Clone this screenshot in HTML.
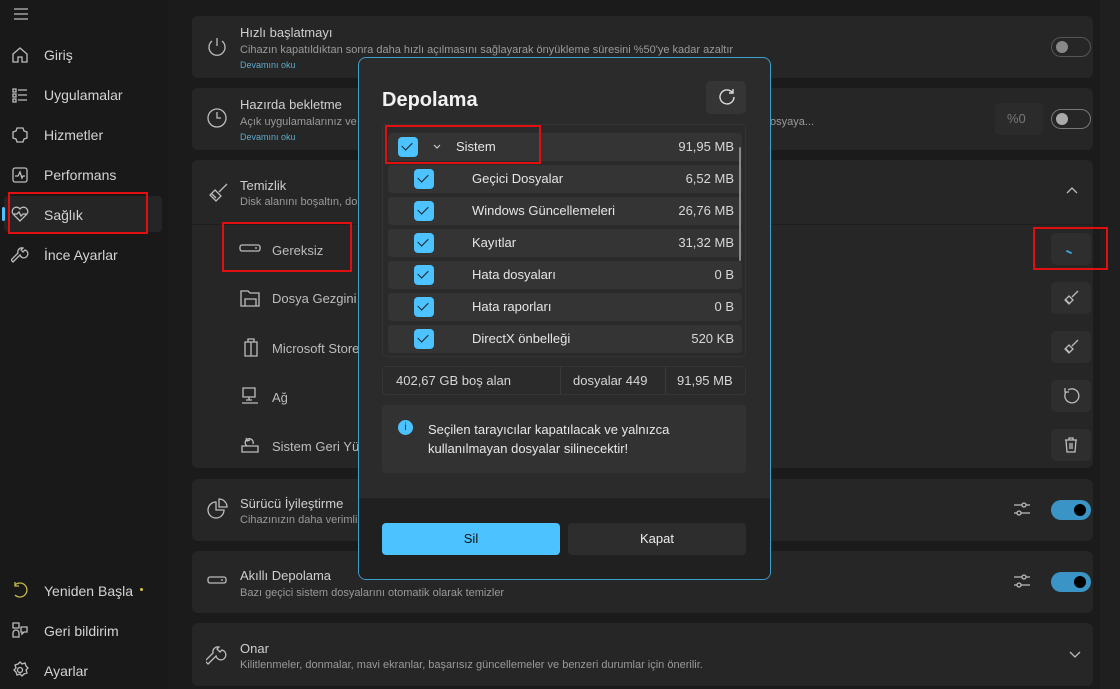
<!DOCTYPE html>
<html><head><meta charset="utf-8"><style>
*{margin:0;padding:0;box-sizing:border-box}
body{width:1120px;height:689px;overflow:hidden;background:#1b1b1b;font-family:"Liberation Sans","Noto Sans CJK JP",sans-serif;position:relative;color:#d0d0d0}
.a{position:absolute}
.side{left:0;top:0;width:168px;height:689px;background:#191919}
.nav{position:absolute;left:44px;font-size:14px;color:#d4d4d4}
.ic{position:absolute;stroke:#bdbdbd;fill:none;stroke-width:1.3}
.card{position:absolute;left:192px;width:901px;background:#262626;border-radius:6px}
.t{position:absolute;font-size:13px;color:#cfcfcf}
.s{position:absolute;font-size:11px;color:#9a9a9a;white-space:nowrap}
.l{position:absolute;font-size:9px;color:#5fa9c9}
.sub{position:absolute;font-size:13px;color:#bdbdbd}
.btn{position:absolute;left:1051px;width:40px;height:32px;background:#2e2e2e;border-radius:5px}
.red{position:absolute;border:2px solid #e01010}
.tog{position:absolute;width:40px;height:20px;border-radius:10px}
.dlg{left:358px;top:57px;width:413px;height:523px;background:#2b2b2b;border:1px solid #3d9fd0;border-radius:8px;overflow:hidden}
.row{position:absolute;left:5px;width:354px;height:28px;background:#343434;border-radius:4px;font-size:13px;color:#e6e6e6}
.cb{position:absolute;top:4px;width:20px;height:20px;background:#4cc2ff;border-radius:4px}
.cb:after{content:"";position:absolute;left:6px;top:3px;width:5px;height:9px;border:solid #1a1a1a;border-width:0 1.6px 1.6px 0;transform:rotate(45deg)}
.row .n{position:absolute;left:84px;top:6px}
.row .v{position:absolute;right:8px;top:6px;color:#d8d8d8}
</style></head><body>
<div class="a side"></div>
<svg class="ic" style="left:13px;top:8px" width="16" height="12"><path d="M1 1h14M1 6h14M1 11h14"/></svg>
<svg class="ic" style="left:11px;top:46px" width="18" height="18"><path d="M2 8L9 2l7 6v8h-5v-5H7v5H2z"/></svg><div class="nav" style="top:47px">Giriş</div>
<svg class="ic" style="left:11px;top:86px" width="18" height="18"><path d="M2 3h3v3H2zM2 8h3v3H2zM2 13h3v3H2zM7 4h9M7 9h9M7 14h9"/></svg><div class="nav" style="top:87px">Uygulamalar</div>
<svg class="ic" style="left:11px;top:126px" width="18" height="18"><path d="M6 2h6l1 3 3 1v6l-3 1-1 3H6l-1-3-3-1V6l3-1z"/></svg><div class="nav" style="top:127px">Hizmetler</div>
<svg class="ic" style="left:11px;top:166px" width="18" height="18"><rect x="2" y="2" width="14" height="14" rx="2"/><path d="M4 10h3l2-4 2 6 1-2h2"/></svg><div class="nav" style="top:167px">Performans</div>
<div class="a" style="left:4px;top:196px;width:158px;height:36px;background:#252525;border-radius:4px"></div>
<div class="a" style="left:2px;top:207px;width:3px;height:14px;background:#4cc2ff;border-radius:2px"></div>
<svg class="ic" style="left:11px;top:205px" width="18" height="18"><path d="M9 16L2 9a4 4 0 017-5 4 4 0 017 5zM2 9h4l2-2 2 4 2-2h4"/></svg><div class="nav" style="top:207px">Sağlık</div>
<svg class="ic" style="left:11px;top:246px" width="18" height="18"><path d="M2 16l7-7a4 4 0 105-5l-2 2-2-2 2-2a4 4 0 00-5 5l-7 7z"/></svg><div class="nav" style="top:247px">İnce Ayarlar</div>
<svg class="ic" style="left:11px;top:581px;stroke:#c9b84a" width="18" height="18"><path d="M4 4a7 7 0 110 10M4 1v4h4"/></svg><div class="nav" style="top:583px">Yeniden Başla</div>
<div class="a" style="left:140px;top:588px;width:3px;height:3px;border-radius:2px;background:#d6c33a"></div>
<svg class="ic" style="left:11px;top:621px" width="18" height="18"><path d="M2 2h6v5H2zM10 6h6v5h-3l-2 2v-2h-1zM2 12a3 3 0 016 0v4H2z"/></svg><div class="nav" style="top:623px">Geri bildirim</div>
<svg class="ic" style="left:11px;top:661px" width="18" height="18"><circle cx="9" cy="9" r="2.5"/><path d="M9 1l2 2 3-1 1 3 2 2-2 2 1 3-3 1-2 2-2-2-3 1-1-3-2-2 2-2-1-3 3-1z"/></svg><div class="nav" style="top:663px">Ayarlar</div>

<div class="a" style="left:1100px;top:0;width:20px;height:689px;background:#1f1f1f"></div>

<div class="card" style="top:16px;height:62px"></div>
<svg class="ic" style="left:206px;top:36px" width="22" height="22"><path d="M11 2v8M6 5a8 8 0 1010 0"/></svg>
<div class="t" style="left:240px;top:25px">Hızlı başlatmayı</div>
<div class="s" style="left:240px;top:44px">Cihazın kapatıldıktan sonra daha hızlı açılmasını sağlayarak önyükleme süresini %50'ye kadar azaltır</div>
<div class="l" style="left:240px;top:60px">Devamını oku</div>
<div class="tog" style="left:1051px;top:37px;border:1px solid #555"></div><div class="a" style="left:1056px;top:41px;width:12px;height:12px;border-radius:6px;background:#888"></div>

<div class="card" style="top:88px;height:62px"></div>
<svg class="ic" style="left:206px;top:107px" width="22" height="22"><circle cx="11" cy="11" r="9"/><path d="M11 5v6h4"/></svg>
<div class="t" style="left:240px;top:97px">Hazırda bekletme</div>
<div class="s" style="left:240px;top:116px">Açık uygulamalarınız ve belgelerinizi kaydederek cihazınızı kapatır, dosyaya...</div>
<div class="s" style="left:770px;top:116px">osyaya...</div>
<div class="l" style="left:240px;top:132px">Devamını oku</div>
<div class="a" style="left:995px;top:103px;width:48px;height:32px;background:#2b2b2b;border-radius:4px;font-size:13px;color:#777;padding:8px 0 0 12px">%0</div>
<div class="tog" style="left:1051px;top:109px;border:1px solid #777"></div><div class="a" style="left:1056px;top:113px;width:12px;height:12px;border-radius:6px;background:#aaa"></div>

<div class="card" style="top:160px;height:308px"></div>
<div class="a" style="left:192px;top:224px;width:901px;height:1px;background:#1e1e1e"></div>
<svg class="ic" style="left:207px;top:182px" width="22" height="22"><path d="M20 2l-8 8M8 8l6 6-5 5-6-6zM5 12l4 4"/></svg>
<div class="t" style="left:240px;top:178px">Temizlik</div>
<div class="s" style="left:240px;top:196px">Disk alanını boşaltın, dosyaları temizleyin ve daha fazla yer açmak için programları kaldırın, dosya ... kapın</div>
<svg class="a" style="left:1066px;top:186px" width="12" height="8"><path d="M1 7l5-5 5 5" stroke="#bbb" fill="none" stroke-width="1.3"/></svg>
<svg class="ic" style="left:239px;top:242px" width="22" height="14"><rect x="1" y="3" width="20" height="6" rx="2"/><path d="M16 6h2"/></svg><div class="sub" style="left:272px;top:243px">Gereksiz</div>
<svg class="ic" style="left:240px;top:288px" width="20" height="20"><path d="M1 3h7l2 2h9v13H1zM5 11h11v7H5z"/></svg><div class="sub" style="left:272px;top:291px">Dosya Gezgini</div>
<svg class="ic" style="left:242px;top:337px" width="18" height="20"><path d="M3 5h12v14H3zM6 5V2h6v3M9 5v14"/></svg><div class="sub" style="left:272px;top:341px">Microsoft Store</div>
<svg class="ic" style="left:240px;top:386px" width="20" height="20"><path d="M3 2h12v9H3zM6 14h6M9 11v3M2 17h16"/></svg><div class="sub" style="left:272px;top:390px">Ağ</div>
<svg class="ic" style="left:240px;top:434px" width="20" height="20"><path d="M2 12h16v6H2zM7 12a4 4 0 116-2M6 4l1 3 3-1"/></svg><div class="sub" style="left:272px;top:439px">Sistem Geri Yükleme</div>
<div class="btn" style="top:233px"></div><div class="a" style="left:1066px;top:251px;width:6px;height:2px;background:#3da0d6;transform:rotate(25deg)"></div>
<div class="btn" style="top:282px"></div><svg class="ic" style="left:1062px;top:289px" width="18" height="18"><path d="M16 2l-6 6M7 7l4 4-4 4-4-4zM4 11l3 3"/></svg>
<div class="btn" style="top:331px"></div><svg class="ic" style="left:1062px;top:338px" width="18" height="18"><path d="M16 2l-6 6M7 7l4 4-4 4-4-4zM4 11l3 3"/></svg>
<div class="btn" style="top:380px"></div><svg class="ic" style="left:1062px;top:387px" width="18" height="18"><path d="M4 5a7 7 0 102-2M3 1v4h4"/></svg>
<div class="btn" style="top:429px"></div><svg class="ic" style="left:1062px;top:436px" width="18" height="18"><path d="M3 4h12M7 4V2h4v2M4 4l1 12h8l1-12M8 7v6M10 7v6"/></svg>

<div class="card" style="top:479px;height:62px"></div>
<svg class="ic" style="left:206px;top:498px" width="22" height="22"><path d="M10 4a8 8 0 108 8h-8zM13 1a8 8 0 018 8h-8z"/></svg>
<div class="t" style="left:240px;top:496px">Sürücü İyileştirme</div>
<div class="s" style="left:240px;top:514px">Cihazınızın daha verimli çalışmasına yardımcı olmak için sürücülerinizi optimize edin</div>
<svg class="ic" style="left:1013px;top:501px" width="18" height="16"><path d="M1 4h16M1 12h16"/><circle cx="11" cy="4" r="2" fill="#262626"/><circle cx="6" cy="12" r="2" fill="#262626"/></svg>
<div class="tog" style="left:1051px;top:500px;background:#3a94c6"></div><div class="a" style="left:1074px;top:504px;width:12px;height:12px;border-radius:6px;background:#000"></div>

<div class="card" style="top:551px;height:62px"></div>
<svg class="ic" style="left:207px;top:575px" width="22" height="12"><rect x="1" y="2" width="18" height="6" rx="2"/><path d="M14 5h2"/></svg>
<div class="t" style="left:240px;top:568px">Akıllı Depolama</div>
<div class="s" style="left:240px;top:587px">Bazı geçici sistem dosyalarını otomatik olarak temizler</div>
<svg class="ic" style="left:1013px;top:573px" width="18" height="16"><path d="M1 4h16M1 12h16"/><circle cx="11" cy="4" r="2" fill="#262626"/><circle cx="6" cy="12" r="2" fill="#262626"/></svg>
<div class="tog" style="left:1051px;top:572px;background:#3a94c6"></div><div class="a" style="left:1074px;top:576px;width:12px;height:12px;border-radius:6px;background:#000"></div>

<div class="card" style="top:623px;height:63px"></div>
<svg class="ic" style="left:206px;top:644px" width="22" height="22"><path d="M2 20l8-8a5 5 0 106-6l-2 2-3-3 2-2a5 5 0 00-6 6l-8 8z"/></svg>
<div class="t" style="left:240px;top:641px">Onar</div>
<div class="s" style="left:240px;top:659px">Kilitlenmeler, donmalar, mavi ekranlar, başarısız güncellemeler ve benzeri durumlar için önerilir.</div>
<svg class="a" style="left:1069px;top:651px" width="12" height="8"><path d="M1 1l5 5 5-5" stroke="#bbb" fill="none" stroke-width="1.3"/></svg>

<div class="a dlg">
 <div class="a" style="left:0;top:440px;width:413px;height:83px;background:#202020"></div>
 <div class="a" style="left:23px;top:31px;font-size:20px;font-weight:bold;color:#f2f2f2">Depolama</div>
 <div class="a" style="left:347px;top:23px;width:40px;height:33px;background:#353535;border-radius:5px"></div>
 <svg class="a" style="left:357px;top:29px" width="20" height="20"><path d="M16 5a7 7 0 102 5M17 2v4h-4" stroke="#ddd" fill="none" stroke-width="1.4"/></svg>
 <div class="a" style="left:23px;top:66px;width:364px;height:233px;border:1px solid #333;border-radius:5px;background:#2a2a2a">
  <div class="row" style="top:8px;width:354px"><div class="cb" style="left:10px"></div><svg class="a" style="left:44px;top:10px" width="10" height="8"><path d="M2 2l3 3 3-3" stroke="#ccc" fill="none" stroke-width="1.2"/></svg><div class="n" style="left:68px">Sistem</div><div class="v">91,95 MB</div></div>
  <div class="row" style="top:40px"><div class="cb" style="left:26px"></div><div class="n">Geçici Dosyalar</div><div class="v">6,52 MB</div></div>
  <div class="row" style="top:72px"><div class="cb" style="left:26px"></div><div class="n">Windows Güncellemeleri</div><div class="v">26,76 MB</div></div>
  <div class="row" style="top:104px"><div class="cb" style="left:26px"></div><div class="n">Kayıtlar</div><div class="v">31,32 MB</div></div>
  <div class="row" style="top:136px"><div class="cb" style="left:26px"></div><div class="n">Hata dosyaları</div><div class="v">0 B</div></div>
  <div class="row" style="top:168px"><div class="cb" style="left:26px"></div><div class="n">Hata raporları</div><div class="v">0 B</div></div>
  <div class="row" style="top:200px"><div class="cb" style="left:26px"></div><div class="n">DirectX önbelleği</div><div class="v">520 KB</div></div>
  <div class="a" style="left:356px;top:22px;width:2px;height:114px;background:#8a8a8a;border-radius:1px"></div>
 </div>
 <div class="a" style="left:23px;top:308px;width:364px;height:29px;border:1px solid #353535;border-radius:4px;font-size:13px;color:#d6d6d6">
  <div class="a" style="left:13px;top:6px">402,67 GB boş alan</div>
  <div class="a" style="left:177px;top:0;width:1px;height:27px;background:#3a3a3a"></div>
  <div class="a" style="left:190px;top:6px">dosyalar 449</div>
  <div class="a" style="left:282px;top:0;width:1px;height:27px;background:#3a3a3a"></div>
  <div class="a" style="left:294px;top:6px">91,95 MB</div>
 </div>
 <div class="a" style="left:23px;top:347px;width:364px;height:68px;background:#323232;border-radius:4px">
  <div class="a" style="left:16px;top:15px;width:15px;height:15px;border-radius:8px;background:#4cc2ff;color:#1a1a1a;font-size:10px;text-align:center;line-height:15px">i</div>
  <div class="a" style="left:46px;top:15px;font-size:13px;line-height:19px;color:#e8e8e8">Seçilen tarayıcılar kapatılacak ve yalnızca<br>kullanılmayan dosyalar silinecektir!</div>
 </div>
 <div class="a" style="left:23px;top:465px;width:178px;height:32px;background:#4cc2ff;border-radius:4px;font-size:13px;color:#111;text-align:center;line-height:32px">Sil</div>
 <div class="a" style="left:209px;top:465px;width:178px;height:32px;background:#2d2d2d;border-radius:4px;font-size:13px;color:#eee;text-align:center;line-height:32px">Kapat</div>
</div>

<div class="red" style="left:8px;top:192px;width:140px;height:42px"></div>
<div class="red" style="left:222px;top:222px;width:130px;height:50px"></div>
<div class="red" style="left:385px;top:125px;width:156px;height:39px"></div>
<div class="red" style="left:1033px;top:227px;width:75px;height:43px"></div>
</body></html>
